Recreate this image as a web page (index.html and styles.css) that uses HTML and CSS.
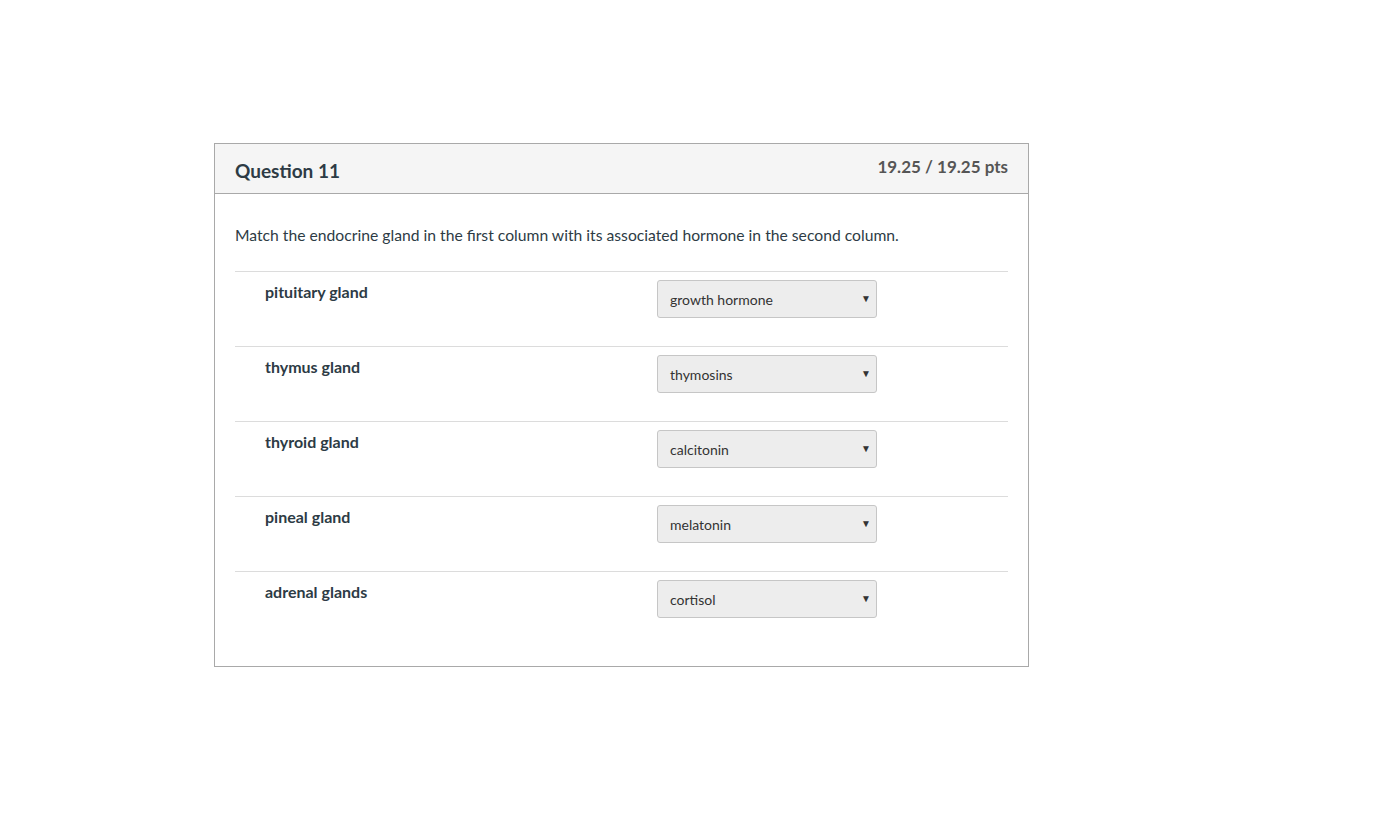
FILE: index.html
```html
<!DOCTYPE html>
<html lang="en">
<head>
    <meta charset="UTF-8">
    <title>Question 11</title>
    <link rel="stylesheet" href="styles.css">
</head>
<body>
    <div class="page">
        <div class="question">
            <div class="question-header">
                <h2>Question 11</h2>
                <div class="points">19.25 / 19.25 pts</div>
            </div>
            <div class="question-body">
                <p class="question-text">Match the endocrine gland in the first column with its associated hormone in the second column.</p>

                <div class="match-row">
                    <div class="match-label">pituitary gland</div>
                    <div class="select-box"><span>growth hormone</span><span class="arrow">▼</span></div>
                </div>
                <div class="match-row">
                    <div class="match-label">thymus gland</div>
                    <div class="select-box"><span>thymosins</span><span class="arrow">▼</span></div>
                </div>
                <div class="match-row">
                    <div class="match-label">thyroid gland</div>
                    <div class="select-box"><span>calcitonin</span><span class="arrow">▼</span></div>
                </div>
                <div class="match-row">
                    <div class="match-label">pineal gland</div>
                    <div class="select-box"><span>melatonin</span><span class="arrow">▼</span></div>
                </div>
                <div class="match-row">
                    <div class="match-label">adrenal glands</div>
                    <div class="select-box"><span>cortisol</span><span class="arrow">▼</span></div>
                </div>
            </div>
        </div>
    </div>
</body>
</html>
```

FILE: styles.css
```css
body {
    margin: 0;
    font-family: Lato, "Liberation Sans", sans-serif;
    color: #2d3b45;
    background: white;
}

.page {
    padding: 143px 0 0 214px;
}

.question {
    width: 815px;
    box-sizing: border-box;
    border: 1px solid #a9a9a9;
}

.question-header {
    height: 50px;
    box-sizing: border-box;
    background: #f5f5f5;
    border-bottom: 1px solid #a9a9a9;
    display: flex;
    justify-content: space-between;
    align-items: flex-start;
    padding: 0 20px;
}

.question-header h2 {
    margin: 0;
    padding-top: 16px;
    font-size: 19px;
    font-weight: bold;
    line-height: 22px;
}

.points {
    padding-top: 12px;
    font-size: 17px;
    font-weight: bold;
    line-height: 22px;
    color: #555;
}

.question-body {
    padding: 29px 20px 20px;
}

.question-text {
    margin: 0 0 24px;
    font-size: 15.7px;
    line-height: 24px;
}

.match-row {
    display: grid;
    grid-template-columns: 392px 220px;
    height: 75px;
    box-sizing: border-box;
    padding: 8px 0 0 30px;
    border-top: 1px solid #dcdcdc;
}

.match-label {
    padding-top: 1px;
    font-size: 16px;
    font-weight: bold;
    line-height: 22px;
}

.select-box {
    position: relative;
    height: 38px;
    box-sizing: border-box;
    padding: 0 12px;
    display: flex;
    align-items: center;
    background: #ededed;
    border: 1px solid #c6c6c6;
    border-radius: 3px;
    font-size: 14px;
    color: #333;
}

.arrow {
    position: absolute;
    right: 5px;
    top: 11px;
    font-size: 10px;
    color: #333;
}
```
